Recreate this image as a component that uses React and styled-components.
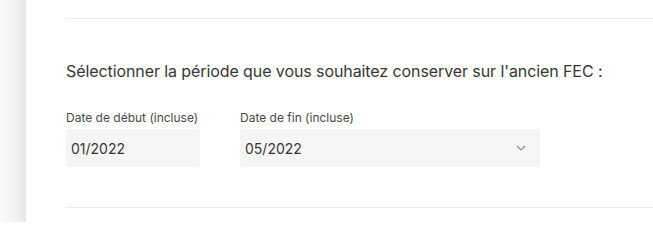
import styled, { createGlobalStyle } from "styled-components"

const GlobalStyle = createGlobalStyle`
    html, body {
        margin: 0;
        padding: 0;
        background: #ffffff;
    }
    body {
        font-family: 'Inter', 'Liberation Sans', sans-serif;
    }
`

const Page = styled.div`
    display: flex;
    width: 653px;
    height: 222px;
    overflow: hidden;
`

const Shade = styled.div`
    width: 26px;
    flex-shrink: 0;
    background: linear-gradient(to right, #fbfbfb 0%, #f4f4f4 50%, #e6e6e6 100%);
`

const Panel = styled.div`
    flex: 1;
    padding-left: 40px;
    display: flex;
    flex-direction: column;
`

const Divider = styled.div`
    height: 1px;
    background: #ebebeb;
    margin-top: ${props => props.$top}px;
`

const Heading = styled.p`
    margin: 42px 0 0 0;
    font-size: 16px;
    line-height: 20px;
    letter-spacing: -0.09px;
    color: #363636;
`

const Fields = styled.div`
    display: flex;
    gap: 40px;
    margin-top: 29px;
`

const Field = styled.div`
    display: flex;
    flex-direction: column;
    width: ${props => props.$width}px;
`

const Label = styled.label`
    font-size: 12px;
    line-height: 16px;
    color: #484848;
    margin-bottom: 3px;
`

const Box = styled.div`
    height: 38px;
    background: #f5f5f5;
    border-radius: 2px;
    display: flex;
    align-items: center;
    justify-content: space-between;
    padding: 0 14px 0 5px;
    font-size: 14px;
    color: #363636;
`

const Chevron = () => (
    <svg width="10" height="6" viewBox="0 0 10 6" fill="none">
        <path d="M1 1l4 4 4-4" stroke="#8a8a8a" strokeWidth="1.1" />
    </svg>
)

export default function App() {
    return (
        <Page>
            <GlobalStyle />
            <Shade />
            <Panel>
                <Divider $top={18} />
                <Heading>Sélectionner la période que vous souhaitez conserver sur l'ancien FEC :</Heading>
                <Fields>
                    <Field $width={134}>
                        <Label>Date de début (incluse)</Label>
                        <Box>01/2022</Box>
                    </Field>
                    <Field $width={300}>
                        <Label>Date de fin (incluse)</Label>
                        <Box>
                            05/2022
                            <Chevron />
                        </Box>
                    </Field>
                </Fields>
                <Divider $top={40} />
            </Panel>
        </Page>
    )
}
